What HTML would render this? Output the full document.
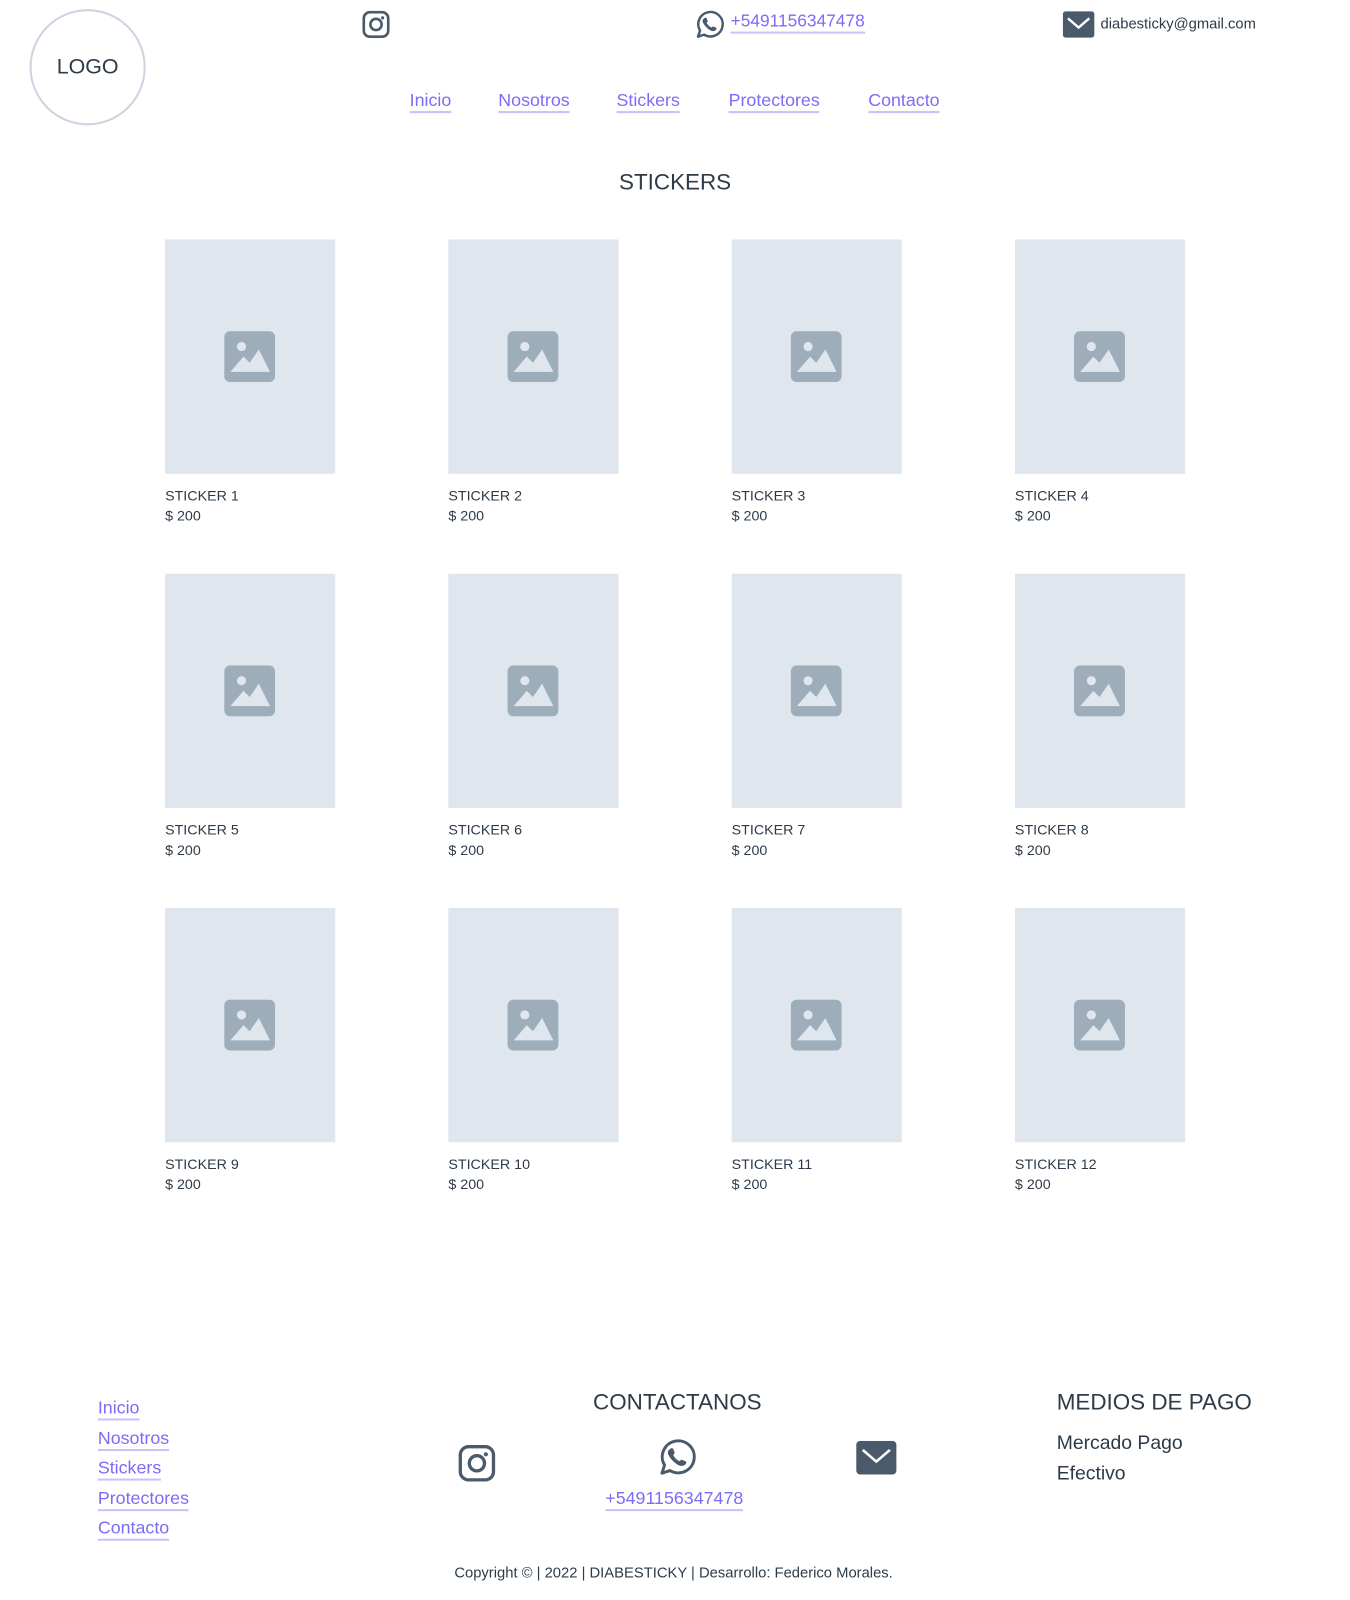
<!DOCTYPE html>
<html><head><meta charset="utf-8"><style>
*{margin:0;padding:0;box-sizing:border-box}
html,body{width:1350px;height:1600px;overflow:hidden;background:#fff}
#w{position:relative;width:1325px;height:1570px;transform:scale(1.019);transform-origin:0 0;font-family:"Liberation Sans",sans-serif;color:#2d3b48}
.a{position:absolute;white-space:nowrap}
a,.lk{color:#7b6cf6;text-decoration:none;border-bottom:2px solid #c9c1fb;padding-bottom:1px}
.card{position:absolute;width:167px;height:230px;background:#e0e6ee}
.card svg{position:absolute;left:58px;top:90px}
.lbl{position:absolute;font-size:14px;line-height:20px;color:#2d3b48}
</style></head><body><div id="w">
<div class="a" style="left:29px;top:9px;width:114px;height:114px;border:2px solid #cbd5df;border-radius:50%;display:flex;align-items:center;justify-content:center;font-size:21px">LOGO</div>

<svg class="a" style="left:355px;top:10px" width="28" height="28" viewBox="0 0 28 28"><rect x="2" y="2" width="24" height="24" rx="6" fill="none" stroke="#4a5a6a" stroke-width="2.6"/><circle cx="14" cy="14" r="5.5" fill="none" stroke="#4a5a6a" stroke-width="2.6"/><circle cx="20.5" cy="7.5" r="1.6" fill="#4a5a6a"/></svg>

<svg class="a" style="left:680px;top:8px" width="32" height="32" viewBox="0 0 32 32"><path d="M5 28 L7 22 A12 12 0 1 1 11 26 Z" fill="none" stroke="#4a5a6a" stroke-width="2.4" stroke-linejoin="round"/><path d="M11 10 c1-1 2-1 2.5 0 l1 2.5 c0.3 0.8-1 1.5-1 2 c1 2 2.5 3.5 4.5 4.5 c0.5 0 1.2-1.3 2-1 l2.5 1 c1 0.5 1 1.5 0 2.5 c-1 1-3 1.5-5 0.5 c-3-1.5-6-4.5-7.5-7.5 c-1-2-0.5-3.5 1-4.5z" fill="#4a5a6a"/></svg>
<div class="a" style="left:717px;top:11px;font-size:17px"><span class="lk">+5491156347478</span></div>

<svg class="a" style="left:1043px;top:11px" width="31" height="26" viewBox="0 0 31 26"><rect width="31" height="26" rx="3" fill="#4a5a6a"/><path d="M5 7 L15.5 16 L26 7" fill="none" stroke="#fff" stroke-width="2.4"/></svg>
<div class="a" style="left:1080px;top:16px;font-size:14.5px;color:#2d3b48">diabesticky@gmail.com</div>

<div class="a" style="left:402px;top:88px;font-size:17.5px"><a>Inicio</a></div>
<div class="a" style="left:489px;top:88px;font-size:17.5px"><a>Nosotros</a></div>
<div class="a" style="left:605px;top:88px;font-size:17.5px"><a>Stickers</a></div>
<div class="a" style="left:715px;top:88px;font-size:17.5px"><a>Protectores</a></div>
<div class="a" style="left:852px;top:88px;font-size:17.5px"><a>Contacto</a></div>

<div class="a" style="left:0;width:1325px;text-align:center;top:166px;font-size:22px">STICKERS</div>

<div id="grid"></div>
<script>
var xs=[162,440,718,996],ys=[235,563,891],h='',n=1;
ys.forEach(function(y){xs.forEach(function(x){
h+='<div class="card" style="left:'+x+'px;top:'+y+'px"><svg width="50" height="50" viewBox="0 0 50 50"><rect width="50" height="50" rx="6" fill="#9eadba"/><circle cx="17" cy="15" r="4.5" fill="#e0e6ee"/><path d="M6 40 L19 25 L25 31 L34 18 L45 40 Z" fill="#e0e6ee"/></svg></div>';
h+='<div class="lbl" style="left:'+x+'px;top:'+(y+241)+'px">STICKER '+n+'</div><div class="lbl" style="left:'+x+'px;top:'+(y+261)+'px">$ 200</div>';n++;});});
document.getElementById('grid').innerHTML=h;
</script>

<div class="a" style="left:96px;top:1367px;font-size:17.5px;line-height:29.5px">
<div><a>Inicio</a></div><div><a>Nosotros</a></div><div><a>Stickers</a></div><div><a>Protectores</a></div><div><a>Contacto</a></div></div>

<div class="a" style="left:582px;top:1363px;font-size:22px">CONTACTANOS</div>
<svg class="a" style="left:449px;top:1417px" width="38" height="38" viewBox="0 0 28 28"><rect x="2" y="2" width="24" height="24" rx="6" fill="none" stroke="#4a5a6a" stroke-width="2.4"/><circle cx="14" cy="14" r="5.5" fill="none" stroke="#4a5a6a" stroke-width="2.4"/><circle cx="20.5" cy="7.5" r="1.5" fill="#4a5a6a"/></svg>
<svg class="a" style="left:643px;top:1409px" width="42" height="42" viewBox="0 0 32 32"><path d="M5 28 L7 22 A12 12 0 1 1 11 26 Z" fill="none" stroke="#4a5a6a" stroke-width="2.2" stroke-linejoin="round"/><path d="M11 10 c1-1 2-1 2.5 0 l1 2.5 c0.3 0.8-1 1.5-1 2 c1 2 2.5 3.5 4.5 4.5 c0.5 0 1.2-1.3 2-1 l2.5 1 c1 0.5 1 1.5 0 2.5 c-1 1-3 1.5-5 0.5 c-3-1.5-6-4.5-7.5-7.5 c-1-2-0.5-3.5 1-4.5z" fill="#4a5a6a"/></svg>
<div class="a" style="left:594px;top:1460px;font-size:17.5px"><span class="lk">+5491156347478</span></div>
<svg class="a" style="left:840px;top:1414px" width="40" height="33" viewBox="0 0 31 26"><rect width="31" height="26" rx="3" fill="#4a5a6a"/><path d="M5 7 L15.5 16 L26 7" fill="none" stroke="#fff" stroke-width="2"/></svg>

<div class="a" style="left:1037px;top:1363px;font-size:22px">MEDIOS DE PAGO</div>
<div class="a" style="left:1037px;top:1402px;font-size:19px;line-height:30px">Mercado Pago<br>Efectivo</div>

<div class="a" style="left:0;width:1322px;text-align:center;top:1536px;font-size:14.5px">Copyright © | 2022 | DIABESTICKY | Desarrollo: Federico Morales.</div>
</div></body></html>
